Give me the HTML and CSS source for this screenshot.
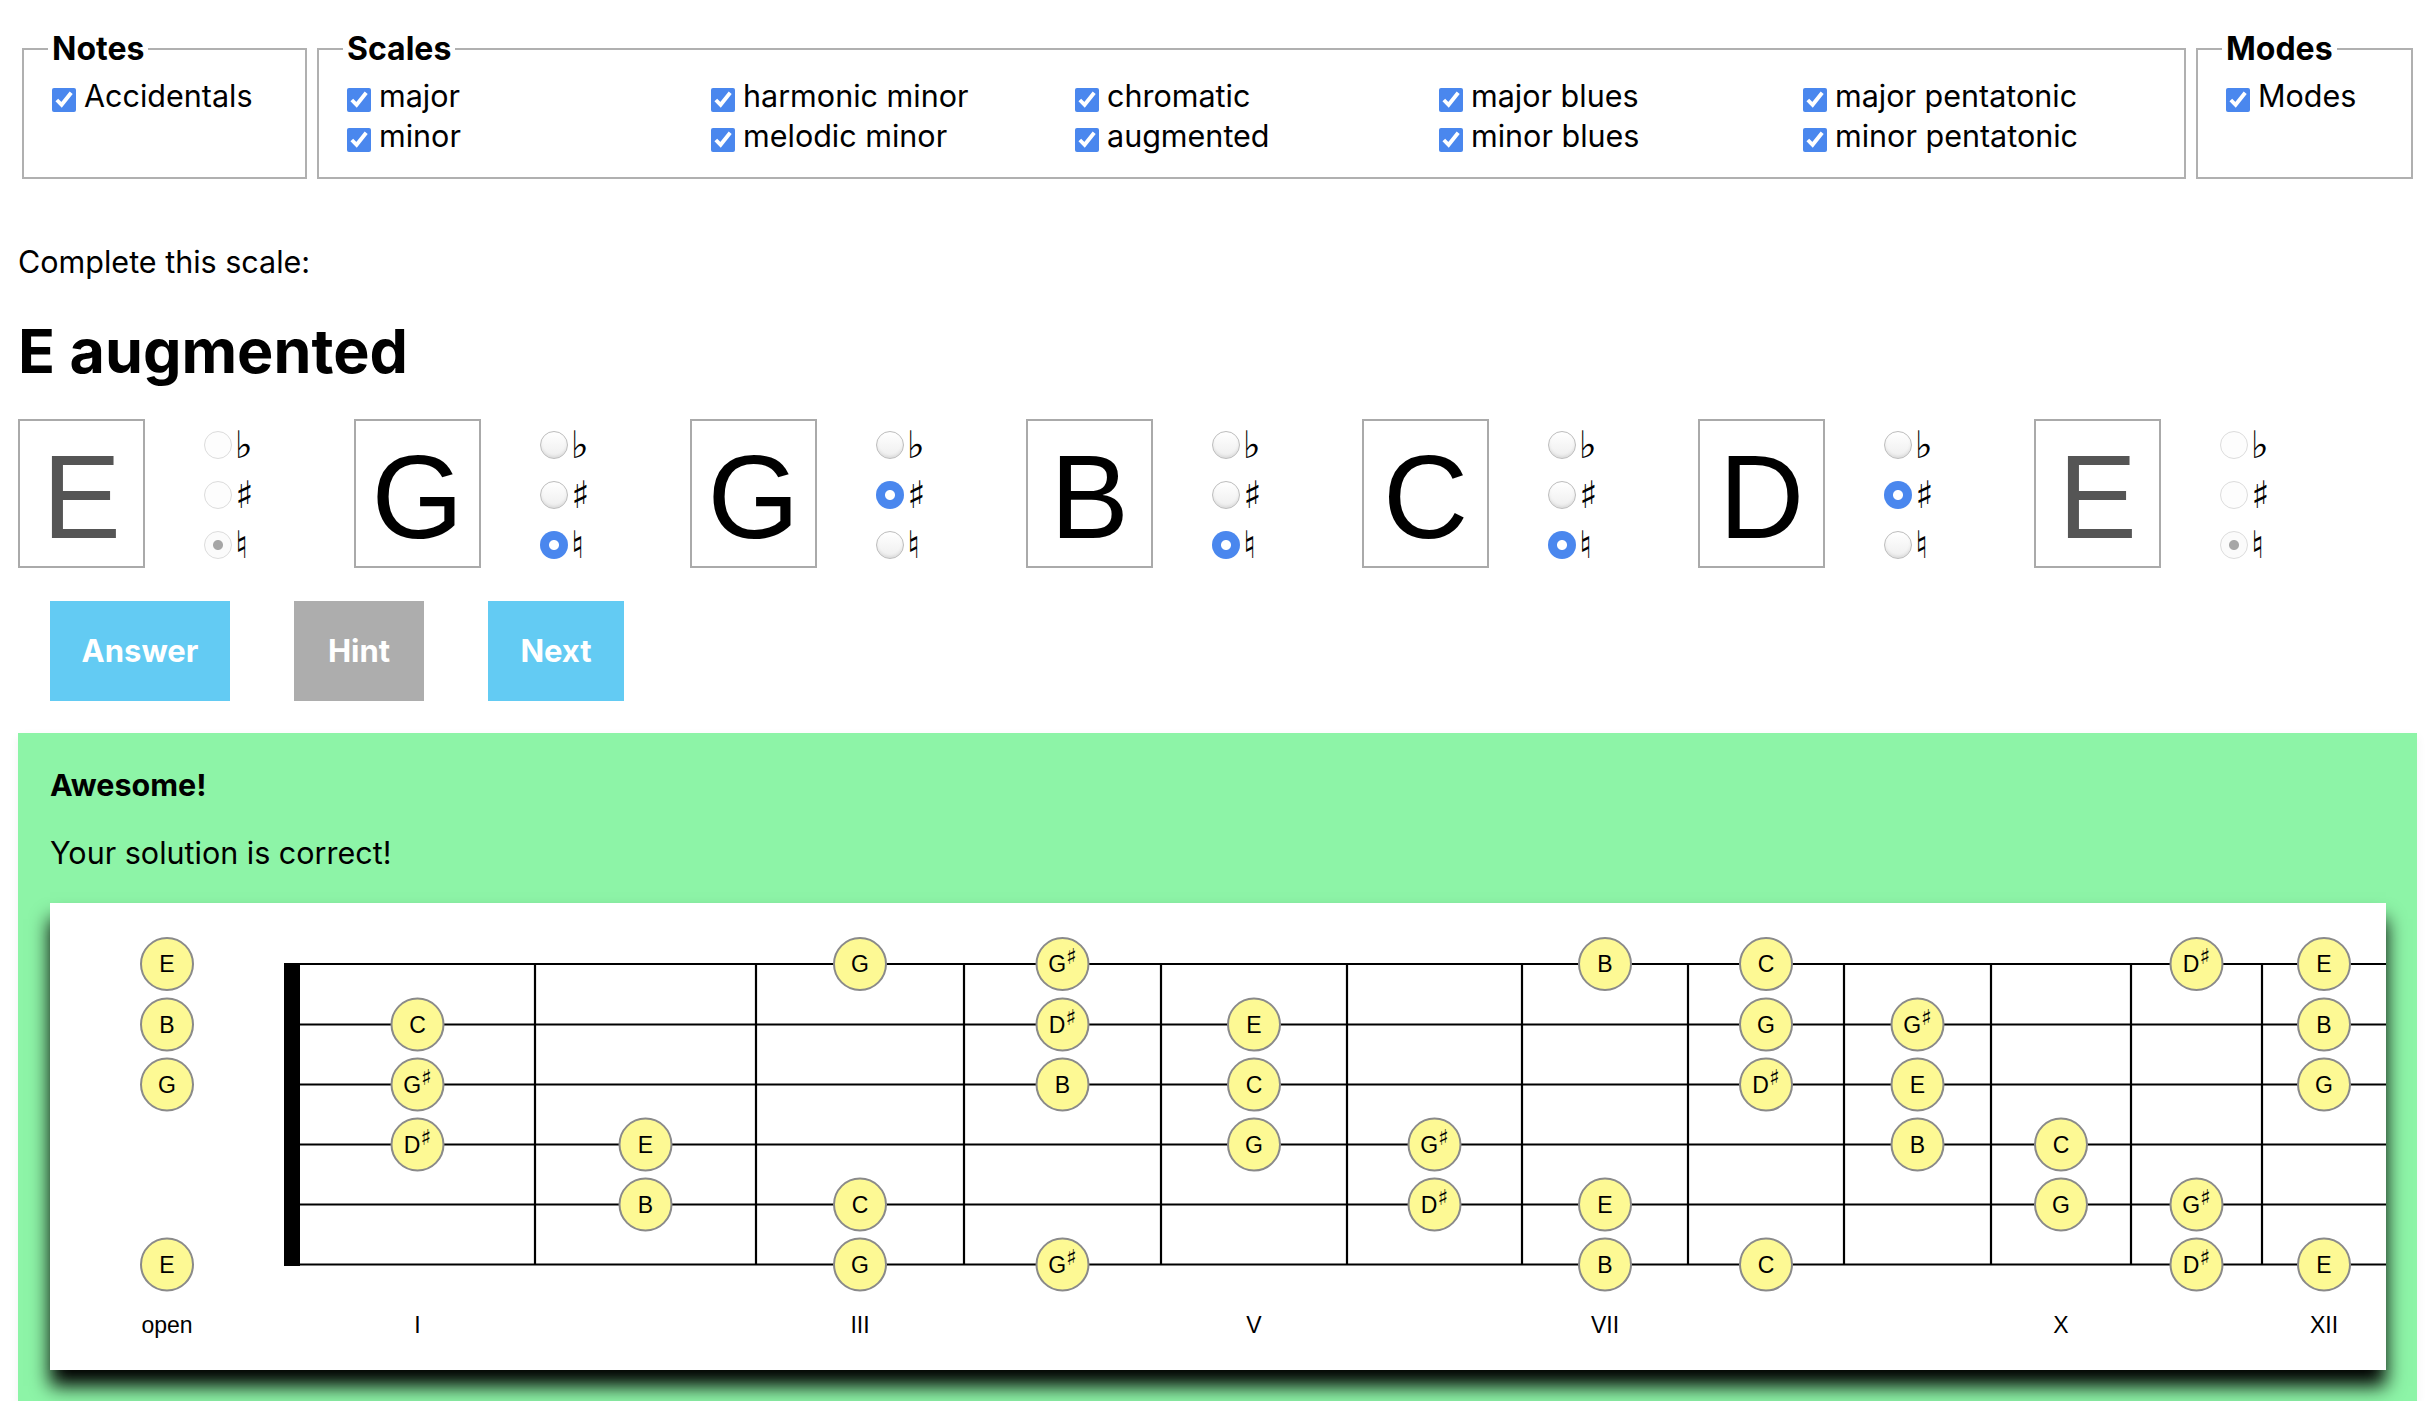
FILE: index.html
```html
<!DOCTYPE html>
<html lang="en">
<head>
<meta charset="utf-8">
<title>Scale trainer</title>
<link rel="stylesheet" href="styles.css">
</head>
<body>
<div class="page">
  <div class="settings">
    <fieldset class="fs fs-notes">
      <legend>Notes</legend>
      <label class="opt"><input type="checkbox" checked>Accidentals</label>
    </fieldset>
    <fieldset class="fs fs-scales">
      <legend>Scales</legend>
      <div class="scale-grid">
        <label class="opt"><input type="checkbox" checked>major</label>
        <label class="opt"><input type="checkbox" checked>minor</label>
        <label class="opt"><input type="checkbox" checked>harmonic minor</label>
        <label class="opt"><input type="checkbox" checked>melodic minor</label>
        <label class="opt"><input type="checkbox" checked>chromatic</label>
        <label class="opt"><input type="checkbox" checked>augmented</label>
        <label class="opt"><input type="checkbox" checked>major blues</label>
        <label class="opt"><input type="checkbox" checked>minor blues</label>
        <label class="opt"><input type="checkbox" checked>major pentatonic</label>
        <label class="opt"><input type="checkbox" checked>minor pentatonic</label>
      </div>
    </fieldset>
    <fieldset class="fs fs-modes">
      <legend>Modes</legend>
      <label class="opt"><input type="checkbox" checked>Modes</label>
    </fieldset>
  </div>

  <p class="prompt">Complete this scale:</p>
  <h1 class="scale-name">E augmented</h1>

  <div class="notes-row">
    <div class="unit">
      <div class="note-box given">E</div>
      <div class="acc">
        <label class="acc-row"><input type="radio" name="a1" disabled><span>♭</span></label>
        <label class="acc-row"><input type="radio" name="a1" disabled><span>♯</span></label>
        <label class="acc-row"><input type="radio" name="a1" disabled checked><span>♮</span></label>
      </div>
    </div>
    <div class="unit">
      <div class="note-box">G</div>
      <div class="acc">
        <label class="acc-row"><input type="radio" name="a2"><span>♭</span></label>
        <label class="acc-row"><input type="radio" name="a2"><span>♯</span></label>
        <label class="acc-row"><input type="radio" name="a2" checked><span>♮</span></label>
      </div>
    </div>
    <div class="unit">
      <div class="note-box">G</div>
      <div class="acc">
        <label class="acc-row"><input type="radio" name="a3"><span>♭</span></label>
        <label class="acc-row"><input type="radio" name="a3" checked><span>♯</span></label>
        <label class="acc-row"><input type="radio" name="a3"><span>♮</span></label>
      </div>
    </div>
    <div class="unit">
      <div class="note-box">B</div>
      <div class="acc">
        <label class="acc-row"><input type="radio" name="a4"><span>♭</span></label>
        <label class="acc-row"><input type="radio" name="a4"><span>♯</span></label>
        <label class="acc-row"><input type="radio" name="a4" checked><span>♮</span></label>
      </div>
    </div>
    <div class="unit">
      <div class="note-box">C</div>
      <div class="acc">
        <label class="acc-row"><input type="radio" name="a5"><span>♭</span></label>
        <label class="acc-row"><input type="radio" name="a5"><span>♯</span></label>
        <label class="acc-row"><input type="radio" name="a5" checked><span>♮</span></label>
      </div>
    </div>
    <div class="unit">
      <div class="note-box">D</div>
      <div class="acc">
        <label class="acc-row"><input type="radio" name="a6"><span>♭</span></label>
        <label class="acc-row"><input type="radio" name="a6" checked><span>♯</span></label>
        <label class="acc-row"><input type="radio" name="a6"><span>♮</span></label>
      </div>
    </div>
    <div class="unit">
      <div class="note-box given">E</div>
      <div class="acc">
        <label class="acc-row"><input type="radio" name="a7" disabled><span>♭</span></label>
        <label class="acc-row"><input type="radio" name="a7" disabled><span>♯</span></label>
        <label class="acc-row"><input type="radio" name="a7" disabled checked><span>♮</span></label>
      </div>
    </div>
  </div>

  <div class="actions">
    <button class="btn btn-blue btn-answer">Answer</button>
    <button class="btn btn-grey btn-hint">Hint</button>
    <button class="btn btn-blue btn-next">Next</button>
  </div>

  <section class="result">
    <p class="result-title">Awesome!</p>
    <p class="result-text">Your solution is correct!</p>
    <div class="fretboard">
      <svg class="fb" width="2336" height="467" viewBox="0 0 2336 467">
        <g class="strings">
          <line x1="250" y1="61" x2="2336" y2="61"/>
          <line x1="250" y1="121.5" x2="2336" y2="121.5"/>
          <line x1="250" y1="181.5" x2="2336" y2="181.5"/>
          <line x1="250" y1="241.5" x2="2336" y2="241.5"/>
          <line x1="250" y1="301.5" x2="2336" y2="301.5"/>
          <line x1="250" y1="361.5" x2="2336" y2="361.5"/>
        </g>
        <g class="frets">
          <line x1="485" y1="61" x2="485" y2="361.5"/>
          <line x1="706" y1="61" x2="706" y2="361.5"/>
          <line x1="914" y1="61" x2="914" y2="361.5"/>
          <line x1="1111" y1="61" x2="1111" y2="361.5"/>
          <line x1="1297" y1="61" x2="1297" y2="361.5"/>
          <line x1="1472" y1="61" x2="1472" y2="361.5"/>
          <line x1="1638" y1="61" x2="1638" y2="361.5"/>
          <line x1="1794" y1="61" x2="1794" y2="361.5"/>
          <line x1="1941" y1="61" x2="1941" y2="361.5"/>
          <line x1="2081" y1="61" x2="2081" y2="361.5"/>
          <line x1="2212" y1="61" x2="2212" y2="361.5"/>
        </g>
        <rect class="nut" x="234" y="60" width="16" height="303"/>

        <g class="notes">
          <!-- string 1 -->
          <g transform="translate(117 61)"><circle r="26"/><text y="8">E</text></g>
          <g transform="translate(810 61)"><circle r="26"/><text y="8">G</text></g>
          <g transform="translate(1012.5 61)"><circle r="26"/><text y="8">G<tspan class="sh" dy="-8">♯</tspan></text></g>
          <g transform="translate(1555 61)"><circle r="26"/><text y="8">B</text></g>
          <g transform="translate(1716 61)"><circle r="26"/><text y="8">C</text></g>
          <g transform="translate(2146.5 61)"><circle r="26"/><text y="8">D<tspan class="sh" dy="-8">♯</tspan></text></g>
          <g transform="translate(2274 61)"><circle r="26"/><text y="8">E</text></g>
          <!-- string 2 -->
          <g transform="translate(117 121.5)"><circle r="26"/><text y="8">B</text></g>
          <g transform="translate(367.5 121.5)"><circle r="26"/><text y="8">C</text></g>
          <g transform="translate(1012.5 121.5)"><circle r="26"/><text y="8">D<tspan class="sh" dy="-8">♯</tspan></text></g>
          <g transform="translate(1204 121.5)"><circle r="26"/><text y="8">E</text></g>
          <g transform="translate(1716 121.5)"><circle r="26"/><text y="8">G</text></g>
          <g transform="translate(1867.5 121.5)"><circle r="26"/><text y="8">G<tspan class="sh" dy="-8">♯</tspan></text></g>
          <g transform="translate(2274 121.5)"><circle r="26"/><text y="8">B</text></g>
          <!-- string 3 -->
          <g transform="translate(117 181.5)"><circle r="26"/><text y="8">G</text></g>
          <g transform="translate(367.5 181.5)"><circle r="26"/><text y="8">G<tspan class="sh" dy="-8">♯</tspan></text></g>
          <g transform="translate(1012.5 181.5)"><circle r="26"/><text y="8">B</text></g>
          <g transform="translate(1204 181.5)"><circle r="26"/><text y="8">C</text></g>
          <g transform="translate(1716 181.5)"><circle r="26"/><text y="8">D<tspan class="sh" dy="-8">♯</tspan></text></g>
          <g transform="translate(1867.5 181.5)"><circle r="26"/><text y="8">E</text></g>
          <g transform="translate(2274 181.5)"><circle r="26"/><text y="8">G</text></g>
          <!-- string 4 -->
          <g transform="translate(367.5 241.5)"><circle r="26"/><text y="8">D<tspan class="sh" dy="-8">♯</tspan></text></g>
          <g transform="translate(595.5 241.5)"><circle r="26"/><text y="8">E</text></g>
          <g transform="translate(1204 241.5)"><circle r="26"/><text y="8">G</text></g>
          <g transform="translate(1384.5 241.5)"><circle r="26"/><text y="8">G<tspan class="sh" dy="-8">♯</tspan></text></g>
          <g transform="translate(1867.5 241.5)"><circle r="26"/><text y="8">B</text></g>
          <g transform="translate(2011 241.5)"><circle r="26"/><text y="8">C</text></g>
          <!-- string 5 -->
          <g transform="translate(595.5 301.5)"><circle r="26"/><text y="8">B</text></g>
          <g transform="translate(810 301.5)"><circle r="26"/><text y="8">C</text></g>
          <g transform="translate(1384.5 301.5)"><circle r="26"/><text y="8">D<tspan class="sh" dy="-8">♯</tspan></text></g>
          <g transform="translate(1555 301.5)"><circle r="26"/><text y="8">E</text></g>
          <g transform="translate(2011 301.5)"><circle r="26"/><text y="8">G</text></g>
          <g transform="translate(2146.5 301.5)"><circle r="26"/><text y="8">G<tspan class="sh" dy="-8">♯</tspan></text></g>
          <!-- string 6 -->
          <g transform="translate(117 361.5)"><circle r="26"/><text y="8">E</text></g>
          <g transform="translate(810 361.5)"><circle r="26"/><text y="8">G</text></g>
          <g transform="translate(1012.5 361.5)"><circle r="26"/><text y="8">G<tspan class="sh" dy="-8">♯</tspan></text></g>
          <g transform="translate(1555 361.5)"><circle r="26"/><text y="8">B</text></g>
          <g transform="translate(1716 361.5)"><circle r="26"/><text y="8">C</text></g>
          <g transform="translate(2146.5 361.5)"><circle r="26"/><text y="8">D<tspan class="sh" dy="-8">♯</tspan></text></g>
          <g transform="translate(2274 361.5)"><circle r="26"/><text y="8">E</text></g>
        </g>

        <g class="labels">
          <text x="117" y="430">open</text>
          <text x="367.5" y="430">I</text>
          <text x="810" y="430">III</text>
          <text x="1204" y="430">V</text>
          <text x="1555" y="430">VII</text>
          <text x="2011" y="430">X</text>
          <text x="2274" y="430">XII</text>
        </g>
      </svg>
    </div>
  </section>
</div>
</body>
</html>
```
FILE: styles.css
```css
html, body {
  margin: 0;
  padding: 0;
  background: #ffffff;
  overflow: hidden;
}

body {
  font-family: Inter, "Noto Sans", "Liberation Sans", sans-serif;
  font-size: 30.5px;
  line-height: 40px;
  color: #000;
}

.page {
  padding: 0 19px 0 18px;
}

/* ---------- settings ---------- */
.settings {
  display: flex;
  gap: 10px;
  padding: 0 4px;
  margin-top: 29px;
}

.fs {
  margin: 0;
  min-width: 0;
  border: 2px solid #b0b0b0;
  padding: 7px 28px 21px 28px;
}

.fs legend {
  font-weight: 700;
  font-size: 32px;
  line-height: 40px;
  padding: 0 4px;
  margin-left: -4px;
}

.fs-notes { width: 285px; box-sizing: border-box; flex: 0 0 auto; }
.fs-modes { width: 217px; box-sizing: border-box; flex: 0 0 auto; }
.fs-scales { flex: 1 1 auto; padding-right: 17px; }

.scale-grid {
  display: grid;
  grid-template-columns: repeat(5, 1fr);
  grid-template-rows: 40px 40px;
  grid-auto-flow: column;
}

.opt {
  display: block;
  white-space: nowrap;
  line-height: 40px;
}

.opt input {
  width: 24px;
  height: 24px;
  margin: 0 8px 0 0;
  vertical-align: -5px;
  accent-color: #4a87ee;
}

/* ---------- prompt ---------- */
.prompt {
  margin: 63px 0 0 0;
}

.scale-name {
  margin: 31px 0 0 0;
  font-size: 61px;
  line-height: 76px;
  font-weight: 700;
}

/* ---------- note row ---------- */
.notes-row {
  display: flex;
  margin-top: 30px;
}

.unit {
  flex: 0 0 336px;
  display: flex;
  align-items: flex-start;
}

.note-box {
  width: 127px;
  height: 149px;
  box-sizing: border-box;
  border: 2px solid #aaaaaa;
  text-align: center;
  font-family: "Liberation Sans", Arial, sans-serif;
  font-size: 118px;
  line-height: 153px;
  color: #000;
}

.note-box.given {
  color: #555555;
}

.acc {
  margin-left: 59px;
  margin-top: 1px;
  display: flex;
  flex-direction: column;
}

.acc-row {
  height: 50px;
  display: flex;
  align-items: center;
}

.acc-row span {
  font-family: "DejaVu Sans", sans-serif;
  font-size: 38px;
  line-height: 50px;
  margin-left: 3px;
  color: #000;
}

.acc-row input {
  -webkit-appearance: none;
  appearance: none;
  margin: 0;
  width: 28px;
  height: 28px;
  border-radius: 50%;
  box-sizing: border-box;
  border: 1px solid #bdbdbd;
  background: linear-gradient(#ffffff, #eeeeee);
  box-shadow: inset 0 -2px 3px rgba(0, 0, 0, 0.08);
}

.acc-row input:checked {
  border: none;
  background: radial-gradient(circle, #ffffff 0 4.5px, #4a87ee 5.5px);
  box-shadow: none;
}

.acc-row input:disabled {
  border-color: #dcdcdc;
  background: #fdfdfd;
  box-shadow: none;
}

.acc-row input:disabled:checked {
  border: 1px solid #dcdcdc;
  background: radial-gradient(circle, #a6a6a6 0 4.5px, #fbfbfb 5.5px);
}

/* ---------- buttons ---------- */
.actions {
  display: flex;
  gap: 64px;
  margin: 31px 0 0 32px;
}

.btn {
  border: none;
  margin: 0;
  height: 100px;
  padding: 0;
  text-align: center;
  font-family: Inter, "Noto Sans", sans-serif;
  font-size: 31px;
  font-weight: 700;
  color: #ffffff;
  line-height: 100px;
}

.btn-answer { width: 180px; }
.btn-hint { width: 130px; }
.btn-next { width: 136px; }

.btn-blue { background: #63cbf3; }
.btn-grey { background: #adadad; }

/* ---------- result ---------- */
.result {
  margin-top: 32px;
  background: #8df4a7;
  padding: 32px 31px 31px 32px;
  box-shadow: 0 4px 10px rgba(0, 0, 0, 0.06);
}

.result p {
  margin: 0;
}

.result-title {
  font-weight: 700;
}

.result .result-text {
  margin-top: 28px;
}

.fretboard {
  margin-top: 30px;
  height: 467px;
  background: #ffffff;
  box-shadow: 0 16px 18px #000000;
}

.fb {
  display: block;
}

.fb .strings line,
.fb .frets line {
  stroke: #000;
  stroke-width: 2.2;
}

.fb .nut {
  fill: #000;
}

.fb .notes circle {
  fill: #fdf994;
  stroke: #8a8a8a;
  stroke-width: 2;
}

.fb .notes text {
  font-family: "Liberation Sans", Arial, sans-serif;
  font-size: 23px;
  text-anchor: middle;
  fill: #000;
}

.fb .notes .sh {
  font-family: "DejaVu Sans", sans-serif;
  font-size: 22px;
}

.fb .labels text {
  font-family: "Liberation Sans", Arial, sans-serif;
  font-size: 23px;
  text-anchor: middle;
  fill: #000;
}
```
